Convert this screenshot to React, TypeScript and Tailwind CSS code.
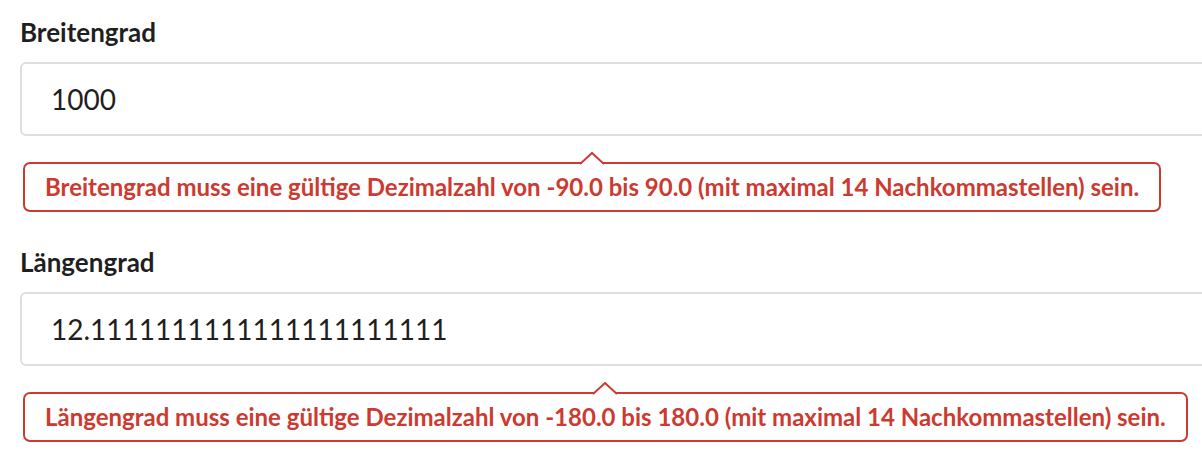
import React from "react";

interface FieldProps {
  label: string;
  value: string;
  error: string;
}

function Field({ label, value, error }: FieldProps) {
  return (
    <div className="flex flex-col items-start">
      <label className="text-[26px] font-bold leading-[30px] text-[#1f1f1f]">{label}</label>
      <input
        readOnly
        value={value}
        className="mt-[15px] h-[74px] w-[1240px] rounded-[6px] border-2 border-[#dedede] bg-white px-[29px] text-[28px] text-[#1f1f1f] outline-none"
      />
      <div className="relative ml-[3px] mt-[26px] rounded-[7px] border-2 border-[#cc3a30] bg-white px-[20px] py-[9px] text-[24px] font-bold leading-[28px] text-[#cc3a30]">
        <svg width="24" height="13" viewBox="0 0 24 13" className="absolute -top-[12px] left-1/2 -translate-x-1/2">
          <polygon points="0,13 12,1 24,13" fill="white" />
          <polyline points="0,12 12,1 24,12" fill="none" stroke="#cc3a30" strokeWidth="2" />
        </svg>
        {error}
      </div>
    </div>
  );
}

export default function App() {
  return (
    <div className="h-[454px] w-full overflow-hidden bg-white pl-[20px] pt-[17px]" style={{ fontFamily: "Lato, 'Liberation Sans', sans-serif" }}>
      <div className="flex flex-col gap-[35px]">
        <Field
          label="Breitengrad"
          value="1000"
          error="Breitengrad muss eine gültige Dezimalzahl von -90.0 bis 90.0 (mit maximal 14 Nachkommastellen) sein."
        />
        <Field
          label="Längengrad"
          value="12.1111111111111111111111"
          error="Längengrad muss eine gültige Dezimalzahl von -180.0 bis 180.0 (mit maximal 14 Nachkommastellen) sein."
        />
      </div>
    </div>
  );
}
